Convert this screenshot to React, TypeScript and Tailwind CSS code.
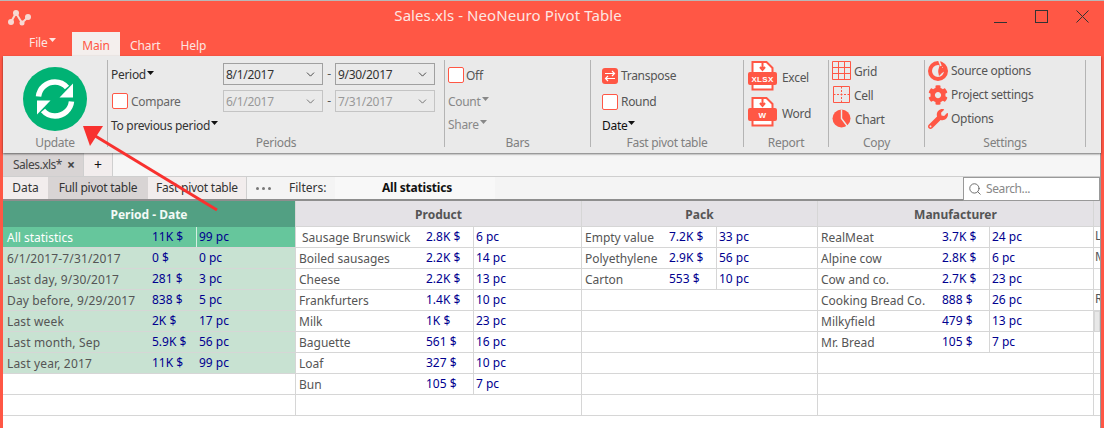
import React from "react";
import { ChevronDown, Search } from "lucide-react";
import { FaCog, FaWrench } from "react-icons/fa";

const RED = "#ff5745";

function Caret({ dark = false }: { dark?: boolean }) {
  return (
    <svg width="7" height="4" viewBox="0 0 7 4" className="inline-block ml-[1px] mb-[6px]">
      <path d="M0 0h7L3.5 4z" fill={dark ? "#111" : "currentColor"} />
    </svg>
  );
}

function T({ children }: { children: React.ReactNode }) {
  return <span className="pt-[2px] whitespace-nowrap">{children}</span>;
}

function Check() {
  return <span className="block w-[16px] h-[16px] shrink-0 bg-white border border-[#ff5745] rounded-[2px]" />;
}

function Combo({ value, disabled = false }: { value: string; disabled?: boolean }) {
  return (
    <div className={"w-[100px] h-[22px] flex items-center justify-between pl-[2px] pr-[5px] border " + (disabled ? "border-[#c4c4c4] text-[#999]" : "border-[#a0a0a0] text-[#333]")}>
      <T>{value}</T>
      <ChevronDown size={13} strokeWidth={1.6} color={disabled ? "#666" : "#333"} />
    </div>
  );
}

function Group({ w, label, children }: { w: string; label: string; children: React.ReactNode }) {
  return (
    <div className={w + " h-[87px] flex flex-col shrink-0 border-r border-[#b4b4b4]"}>
      <div className="h-[75px] shrink-0 pt-[3px]">{children}</div>
      <div className="h-[12px] shrink-0 text-center text-[#808080] leading-[16px]">{label}</div>
    </div>
  );
}

function DocIcon({ label }: { label: string }) {
  return (
    <svg width="29" height="30" viewBox="0 0 29 30" className="shrink-0">
      <path d="M4.5 1h14l6 6v21.5h-20z" fill="#fff" stroke={RED} strokeWidth="2" />
      <path d="M14.5 2v5M12 6l2.500 3L17 6" stroke={RED} strokeWidth="2" fill="none" />
      <rect x="0" y="11" width="29" height="13" rx="2" fill={RED} />
      <text x="14.5" y="21" textAnchor="middle" fill="#fff" fontSize="8" fontWeight="700" fontFamily="'Liberation Sans', sans-serif" letterSpacing="0.3">{label}</text>
    </svg>
  );
}

function Refresh() {
  return (
    <svg width="64" height="64" viewBox="0 0 64 64" className="block">
      <circle cx="32" cy="32" r="32" fill="#00b274" />
      <g fill="none">
        <path d="M15.500 29.500C16.500 21 23.500 15 32 15c5 0 9 2 12 5.500" stroke="#fff" strokeWidth="5.500" />
        <path d="M50 16.500V30.500H36.500z" fill="#fff" />
      </g>
      <g transform="rotate(180 32 32)" fill="none">
        <path d="M15.500 29.500C16.500 21 23.500 15 32 15c5 0 9 2 12 5.500" stroke="#fff" strokeWidth="5.500" />
        <path d="M50 16.500V30.500H36.500z" fill="#fff" />
      </g>
    </svg>
  );
}

function GridIcon() {
  return (
    <svg width="19" height="19" viewBox="0 0 19 19" className="shrink-0">
      <path d="M.5.500h18v18H.5zM6.500.500v18M12.500.500v18M.5 6.500h18M.5 12.500h18" fill="none" stroke={RED} />
    </svg>
  );
}
function CellIcon() {
  return (
    <svg width="19" height="19" viewBox="0 0 19 19" className="shrink-0">
      <path d="M1.500 1.500h16v16h-16z" fill="none" stroke={RED} />
      <path d="M9.500 1.500v16M1.500 9.500h16" fill="none" stroke={RED} strokeDasharray="2 1.500" />
    </svg>
  );
}
function PieIcon() {
  return (
    <svg width="19" height="19" viewBox="0 0 19 19" className="shrink-0">
      <circle cx="9.500" cy="9.500" r="9" fill={RED} />
      <path d="M9.500 .5v9l6 8" fill="none" stroke="#eaeaea" strokeWidth="1.400" />
    </svg>
  );
}
function SourceIcon() {
  return (
    <svg width="20" height="22" viewBox="0 0 20 22" className="shrink-0">
      <circle cx="10" cy="11" r="8" fill="none" stroke={RED} strokeWidth="4" />
      <path d="M10 11l2-7 3 1-1 3 3 0 0 3-3 2-3 3z" fill={RED} />
      <path d="M6 7.500l4 4M11 1l2 5" stroke="#eaeaea" strokeWidth="1.600" fill="none" />
    </svg>
  );
}
function TransposeIcon() {
  return (
    <svg width="16" height="16" viewBox="0 0 16 16" className="shrink-0">
      <rect width="16" height="16" rx="3" fill={RED} />
      <path d="M3 5.500h9.500M10 3l2.500 2.500L10 8M13 10.500H3.500M6 8l-2.500 2.500L6 13" fill="none" stroke="#fff" strokeWidth="1.200" />
    </svg>
  );
}

type Row = [string, string, string];

const cols: { title: string; w: string; name: string; val: string; rows: Row[]; nameOffset?: boolean }[] = [
  { title: "Product", w: "w-[286px]", name: "w-[130px] pl-[3px]", val: "w-[48px]", nameOffset: true, rows: [["Sausage Brunswick", "2.8K $", "6 pc"], ["Boiled sausages", "2.2K $", "14 pc"], ["Cheese", "2.2K $", "13 pc"], ["Frankfurters", "1.4K $", "10 pc"], ["Milk", "1K $", "23 pc"], ["Baguette", "561 $", "16 pc"], ["Loaf", "327 $", "10 pc"], ["Bun", "105 $", "7 pc"]] },
  { title: "Pack", w: "w-[236px]", name: "w-[87px] pl-[3px]", val: "w-[48px]", rows: [["Empty value", "7.2K $", "33 pc"], ["Polyethylene", "2.9K $", "56 pc"], ["Carton", "553 $", "10 pc"]] },
  { title: "Manufacturer", w: "w-[276px]", name: "w-[124px] pl-[3px]", val: "w-[48px]", rows: [["RealMeat", "3.7K $", "24 pc"], ["Alpine cow", "2.8K $", "6 pc"], ["Cow and co.", "2.7K $", "23 pc"], ["Cooking Bread Co.", "888 $", "26 pc"], ["Milkyfield", "479 $", "13 pc"], ["Mr. Bread", "105 $", "7 pc"]] },
];

const periods: Row[] = [
  ["6/1/2017-7/31/2017", "0 $", "0 pc"],
  ["Last day, 9/30/2017", "281 $", "3 pc"],
  ["Day before, 9/29/2017", "838 $", "5 pc"],
  ["Last week", "2K $", "17 pc"],
  ["Last month, Sep", "5.9K $", "56 pc"],
  ["Last year, 2017", "11K $", "99 pc"],
];

function DataCol({ c }: { c: (typeof cols)[number] }) {
  const blanks = Array.from({ length: 9 - c.rows.length });
  return (
    <div className={c.w + " shrink-0 border-r border-[#d6d6d6]"}>
      <div className="h-[26px] pt-[2px] bg-[#e4e2e6] border-b border-[#d6d6d6] flex items-center justify-center font-bold text-[#555]">{c.title}</div>
      {c.rows.map((r, i) => (
        <div key={r[0]} className="h-[21px] flex items-center border-b border-[#d6d6d6] text-[#555]">
          <div className={c.name + " pt-[2px] whitespace-nowrap overflow-visible " + (c.nameOffset && i === 0 ? "pl-[6px]" : "")}>{r[0]}</div>
          <div className={c.val + " h-full border-r border-[#d6d6d6] text-[#00008f] leading-[19px]"}>{r[1]}</div>
          <div className="pl-[2px] text-[#00008f] leading-[19px] h-full">{r[2]}</div>
        </div>
      ))}
      {blanks.map((_, i) => (
        <div key={i} className="h-[21px] border-b border-[#d6d6d6]" />
      ))}
    </div>
  );
}

export default function App() {
  return (
    <div className="relative w-[1104px] h-[428px] overflow-hidden bg-[#ff5745] border-t border-[#b8b8b8] text-[12px] leading-[18px]" style={{ fontFamily: "'Noto Sans', sans-serif" }}>
      {/* Title bar */}
      <div className="h-[31px] flex items-center relative">
        <svg width="24" height="20" viewBox="0 0 24 20" className="ml-[8px] mt-[2px] shrink-0">
          <path d="M3 14L8 5l6 10 6-6" fill="none" stroke="#f7d9d3" strokeWidth="2" />
          <circle cx="3" cy="14" r="3" fill="#f7d9d3" />
          <circle cx="8" cy="5" r="3" fill="#f7d9d3" />
          <circle cx="14" cy="15" r="2.500" fill="#f7d9d3" />
          <circle cx="20" cy="9" r="3" fill="#f7d9d3" />
        </svg>
        <div className="flex-1 text-center text-[15px] tracking-[0.08px] text-[#fde6e2] ml-[-30px] mr-[90px] pb-[4px]">Sales.xls - NeoNeuro Pivot Table</div>
        <div className="flex items-start h-full text-[#333] absolute right-[15px] top-0 gap-[28px] pt-[9px]">
          <div className="w-[13px] h-[13px] flex items-end"><div className="w-full h-[1px] bg-[#333]" /></div>
          <div className="w-[13px] h-[13px] border border-[#333]" />
          <svg width="13" height="13" viewBox="0 0 13 13"><path d="M.5.500l12 12M12.500.500l-12 12" stroke="#333" fill="none" /></svg>
        </div>
      </div>
      {/* Menu tabs */}
      <div className="h-[24px] flex items-end pl-[29px] text-[#fde6e2] tracking-[-0.1px]">
        <div className="w-[43px] h-[24px] pb-[3px] flex items-center">File<Caret /></div>
        <div className="w-[48px] h-[24px] bg-[#f4efed] text-[#ff5745] flex items-center justify-center pt-[3px]">Main</div>
        <div className="ml-[10px] h-[24px] flex items-center pt-[3px]">Chart</div>
        <div className="ml-[20px] h-[24px] flex items-center pt-[3px]">Help</div>
      </div>
      {/* Ribbon */}
      <div className="ml-[3px] mr-[3px] h-[97px] bg-[#eaeaea] flex pt-[4px] shadow-[0_1px_2px_rgba(0,0,0,0.55)] relative text-[#555] tracking-[-0.3px]">
        <Group w="w-[105px]" label="Update">
          <div className="pl-[20px] pt-[4px]"><Refresh /></div>
        </Group>
        <Group w="w-[337px]" label="Periods">
          <div className="pl-[3px]">
            <div className="flex items-center h-[22px]">
              <div className="w-[112px] text-[#333] pt-[2px]">Period<Caret dark /></div>
              <Combo value="8/1/2017" />
              <div className="w-[12px] text-center">-</div>
              <Combo value="9/30/2017" />
            </div>
            <div className="flex items-center h-[22px] mt-[5px]">
              <div className="w-[112px] flex items-center gap-[3px] pl-[1px] text-[#666]"><Check /><T>Compare</T></div>
              <Combo value="6/1/2017" disabled />
              <div className="w-[12px] text-center">-</div>
              <Combo value="7/31/2017" disabled />
            </div>
            <div className="h-[22px] flex items-center mt-[2px] text-[#333] pt-[2px]">To previous period<Caret dark /></div>
          </div>
        </Group>
        <Group w="w-[146px]" label="Bars">
          <div className="pl-[3px] w-[110px]">
            <div className="flex items-center gap-[2px] h-[24px] text-[#555]"><Check /><T>Off</T></div>
            <div className="h-[18px] mt-[6px] flex items-center text-[#888]">Count<Caret /></div>
            <div className="h-[18px] mt-[5px] flex items-center text-[#888]">Share<Caret /></div>
          </div>
        </Group>
        <Group w="w-[153px]" label="Fast pivot table">
          <div className="pl-[11px]">
            <div className="flex items-center gap-[3px] h-[24px] mt-[1px]"><TransposeIcon />Transpose</div>
            <div className="flex items-center gap-[3px] h-[24px] mt-[2px]"><Check />Round</div>
            <div className="h-[18px] mt-[2px] pt-[2px] flex items-center text-[#111]">Date<Caret dark /></div>
          </div>
        </Group>
        <Group w="w-[85px]" label="Report">
          <div className="pl-[4px] -mt-[2px]">
            <div className="flex items-center gap-[5px] h-[30px]"><DocIcon label="XLSX" /><span className="pt-[3px]">Excel</span></div>
            <div className="flex items-center gap-[5px] h-[30px] mt-[6px]"><DocIcon label="W" /><span className="pt-[3px]">Word</span></div>
          </div>
        </Group>
        <Group w="w-[96px]" label="Copy">
          <div className="pl-[3px] -mt-[3px]">
            <div className="flex items-center gap-[3px] h-[21px]"><GridIcon /><T>Grid</T></div>
            <div className="flex items-center gap-[3px] h-[21px] mt-[3px]"><CellIcon /><T>Cell</T></div>
            <div className="flex items-center gap-[4px] h-[21px] mt-[3px]"><PieIcon /><T>Chart</T></div>
          </div>
        </Group>
        <Group w="w-[161px]" label="Settings">
          <div className="pl-[3px] -mt-[3px]">
            <div className="flex items-center gap-[3px] h-[22px]"><SourceIcon />Source options</div>
            <div className="flex items-center gap-[3px] h-[22px] mt-[2px]"><FaCog size={20} color={RED} className="shrink-0" />Project settings</div>
            <div className="flex items-center gap-[3px] h-[22px] mt-[2px]"><FaWrench size={20} color={RED} className="shrink-0" />Options</div>
          </div>
        </Group>
      </div>
      {/* Body */}
      <div className="ml-[3px] mr-[3px] h-[275px] bg-white border-r border-[#999] text-[#444]">
        <div className="h-[24px] flex bg-[#f6f6f6] border-b border-[#cfcfcf]">
          <div className="w-[81px] bg-[#d8d4d4] flex items-center pl-[10px] gap-[5px] text-[#444] border-r border-[#cfcfcf] h-[23px]">
            <span className="tracking-[-0.5px]">Sales.xls*</span>
            <span className="text-[14px] font-bold leading-none">×</span>
          </div>
          <div className="w-[29px] h-[23px] bg-[#f2eded] flex items-center justify-center text-[#111] text-[14px] border-r border-[#cfcfcf]">+</div>
        </div>
        <div className="h-[24px] flex bg-[#f4f4f4] border-b-2 border-[#8e8e8e] text-[#333]">
          <div className="w-[45px] bg-[#f2eded] flex items-center justify-center">Data</div>
          <div className="w-[100px] bg-[#d8d4d4] flex items-center justify-center tracking-[-0.25px]">Full pivot table</div>
          <div className="w-[99px] bg-[#f2eded] flex items-center justify-center border-r border-[#cfcfcf] tracking-[-0.25px]">Fast pivot table</div>
          <div className="w-[37px] flex items-center gap-[3px] ml-[2px] pl-[7px]">
            <span className="w-[3px] h-[3px] rounded-full bg-[#777]" />
            <span className="w-[3px] h-[3px] rounded-full bg-[#777]" />
            <span className="w-[3px] h-[3px] rounded-full bg-[#777]" />
          </div>
          <div className="w-[49px] flex items-center pl-[3px]">Filters:</div>
          <div className="w-[160px] bg-[#f8f8f8] flex items-center justify-center pl-[4px] font-bold text-[#111] tracking-[-0.2px]">All statistics</div>
          <div className="flex-1" />
          <div className="w-[137px] h-[24px] bg-white border border-[#999] flex items-center pl-[4px] gap-[4px] text-[#888] tracking-[-0.4px]">
            <Search size={14} strokeWidth={1.6} color="#666" />
            <span>Search...</span>
          </div>
        </div>
        <div className="flex relative">
          <div className="w-[293px] shrink-0 border-r border-[#d6d6d6]">
            <div className="h-[26px] pt-[1px] bg-[#52a083] flex items-center justify-center font-bold text-[#f2faf6]">Period - Date</div>
            <div className="h-[21px] bg-[#66c69c] flex items-center border-b border-[#d6d6d6]">
              <div className="w-[149px] pl-[4px] pt-[2px] text-white">All statistics</div>
              <div className="w-[45px] h-full border-r border-[#d6efe2] text-[#00008f] leading-[19px]">11K $</div>
              <div className="pl-[2px] text-[#00008f] leading-[19px] h-full">99 pc</div>
            </div>
            {periods.map((r) => (
              <div key={r[0]} className="h-[21px] bg-[#c8e2d2] flex items-center border-b border-[#d6d6d6] text-[#555]">
                <div className="w-[149px] pl-[4px] pt-[2px] whitespace-nowrap tracking-[0.15px]">{r[0]}</div>
                <div className="w-[45px] h-full text-[#00008f] leading-[19px]">{r[1]}</div>
                <div className="pl-[2px] text-[#00008f] leading-[19px] h-full">{r[2]}</div>
              </div>
            ))}
            <div className="h-[21px] border-b border-[#d6d6d6]" />
            <div className="h-[21px] border-b border-[#d6d6d6]" />
          </div>
          {cols.map((c) => (
            <DataCol key={c.title} c={c} />
          ))}
          <div className="w-[6px] shrink-0 overflow-hidden text-[#555]">
            <div className="h-[26px] bg-[#e4e2e6] border-b border-[#d6d6d6]" />
            {["L", "M", "", "R", "", "", "", "", ""].map((t, i) => (
              <div key={i} className={"h-[21px] border-b border-[#d6d6d6] pl-[1px] " + (i === 4 ? "bg-[#e8e8e8] border border-[#999]" : "")}>{t}</div>
            ))}
          </div>
        </div>
      </div>
      {/* Annotation arrow */}
      <svg width="1104" height="428" className="absolute left-0 top-0 pointer-events-none">
        <path d="M217 209L92 133" stroke="#f8312f" strokeWidth="3" fill="none" />
        <path d="M83 125L103 125L90 145z" fill="#f8312f" />
      </svg>
    </div>
  );
}
